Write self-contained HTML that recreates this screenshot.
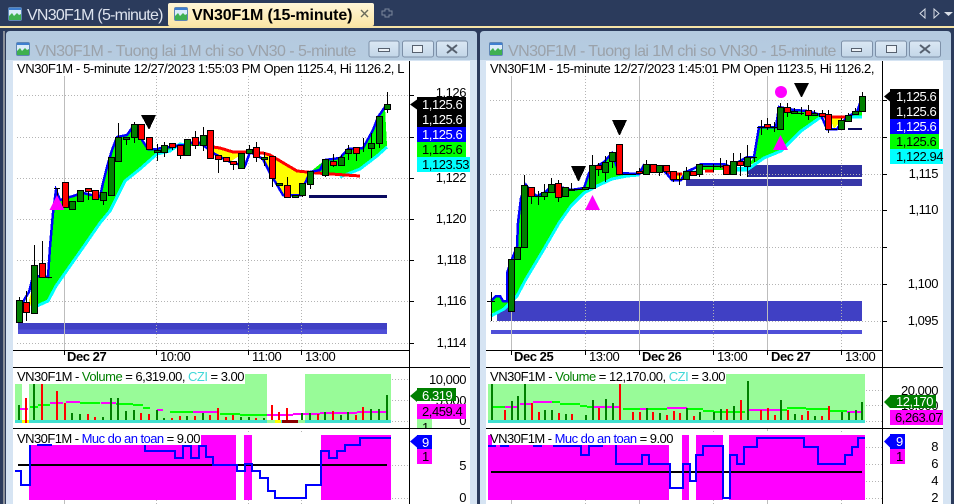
<!DOCTYPE html>
<html><head><meta charset="utf-8"><style>
html,body{margin:0;padding:0;background:#2b3b5c;width:954px;height:504px;overflow:hidden}
svg{display:block}
text{font-family:"Liberation Sans",Arial,sans-serif;font-size:13px;letter-spacing:-.45px;fill:#000}
.c{shape-rendering:crispEdges}
.g{stroke:#b4b4b4;stroke-width:1;stroke-dasharray:1 2;fill:none}
.s{stroke:#bdbdbd;stroke-width:1;fill:none}
.k{stroke:#000;stroke-width:1;fill:none}
.cg{fill:#008000;stroke:#000;stroke-width:1}
.cr{fill:#f00;stroke:#000;stroke-width:1}
.line{fill:none;stroke-linejoin:miter}
.b{font-weight:bold}
.w{fill:#fff}
</style></head><body>
<svg width="954" height="504" viewBox="0 0 954 504" xmlns="http://www.w3.org/2000/svg">
<defs>
<symbol id="ic" viewBox="0 0 14 14"><rect x=".5" y=".5" width="13" height="13" rx="1.500" fill="#dcecfa" stroke="#5f86b5"/><rect x="1" y="1" width="12" height="2" fill="#3f7fd0"/><path d="M1 13V9l3-3 2 3 3-3 2 2 2-1v6z" fill="#3fb050"/></symbol>
<linearGradient id="tab" x1="0" y1="0" x2="0" y2="1"><stop offset="0" stop-color="#fff6d8"/><stop offset="1" stop-color="#fbe6a6"/></linearGradient>
<linearGradient id="win" x1="0" y1="0" x2="0" y2="1"><stop offset="0" stop-color="#b4cadf"/><stop offset="1" stop-color="#d6e4f3"/></linearGradient>
<linearGradient id="btn" x1="0" y1="0" x2="0" y2="1"><stop offset="0" stop-color="#dbe8f4"/><stop offset="1" stop-color="#c3d6e8"/></linearGradient>
</defs>

<!-- top bar -->
<rect width="954" height="504" fill="#2b3b5c"/>
<rect y="26" width="954" height="2" fill="#f7e4a6"/>
<rect x="3" y="31" width="2" height="473" fill="#8a8f98"/>
<rect x="168" y="3" width="206" height="23" rx="2" fill="url(#tab)"/>
<use href="#ic" x="8" y="7" width="14" height="14"/>
<text x="27" y="20" style="font-size:16px;fill:#dde3ee" textLength="136">VN30F1M (5-minute)</text>
<use href="#ic" x="174" y="7" width="14" height="14"/>
<text x="192" y="20" class="b" style="font-size:16px" textLength="160">VN30F1M (15-minute)</text>
<path d="M361 10l7 7M368 10l-7 7" stroke="#6b6b5a" stroke-width="1.400" fill="none"/>
<path d="M385 9h4v2h3v4h-3v2h-4v-2h-3v-4h3z" fill="none" stroke="#7b879c"/>
<path d="M925 9v9l-5-4.500z" fill="none" stroke="#d8dde6"/>
<path d="M934 9v9l5-4.500z" fill="none" stroke="#d8dde6"/>
<path d="M944 12h9l-4.500 4z" fill="#d8dde6"/>

<!-- windows -->
<path d="M6 504V35q0-4 4-4h463q4 0 4 4V504z" fill="url(#win)"/>
<path d="M480 504V35q0-4 4-4h463q4 0 4 4V504z" fill="url(#win)"/>
<rect x="6" y="60" width="471" height="444" fill="#d6e4f3"/>
<rect x="480" y="60" width="471" height="444" fill="#d6e4f3"/>
<use href="#ic" x="16" y="42" width="14" height="14"/>
<use href="#ic" x="489" y="42" width="14" height="14"/>
<text x="35" y="56" style="font-size:16px;fill:#9ba2aa" textLength="321">VN30F1M - Tuong lai 1M chi so VN30 - 5-minute</text>
<text x="508" y="56" style="font-size:16px;fill:#9ba2aa" textLength="328">VN30F1M - Tuong lai 1M chi so VN30 - 15-minute</text>
<g fill="url(#btn)" stroke="#7d90a8">
<rect x="369" y="41" width="30" height="16" rx="2"/><rect x="402.500" y="41" width="31" height="16" rx="2"/><rect x="436.500" y="41" width="31" height="16" rx="2"/>
<rect x="841.500" y="41" width="31" height="16" rx="2"/><rect x="875.500" y="41" width="31" height="16" rx="2"/><rect x="909.500" y="41" width="31" height="16" rx="2"/>
</g>
<g fill="#eef3f8" stroke="#56606e">
<rect x="378.500" y="48.500" width="11" height="3"/><rect x="851.500" y="48.500" width="10" height="3"/>
<rect x="412.500" y="45.500" width="10" height="7"/><rect x="886.500" y="45.500" width="10" height="7"/>
</g>
<path d="M447 45l10 8M457 45l-10 8M920 45l10 8M930 45l-10 8" stroke="#56606e" stroke-width="2" fill="none"/>

<!-- chart backgrounds -->
<rect x="13" y="61" width="457" height="443" fill="#fff"/>
<rect x="486" y="61" width="457" height="443" fill="#fff"/>

<!-- LEFT CHART -->
<g class="c">
<rect x="18" y="323" width="369" height="6.500" fill="#4040c4"/>
<rect x="18" y="329.500" width="369" height="4.500" fill="#4f4fd8"/>
<path class="g" d="M17 95.500H409M17 137.500H409M17 178.500H409M17 219.500H409M17 260.500H409M17 301.500H409M17 343.500H409"/>
<path class="s" d="M64.500 76V350M64.500 428V431M64.500 500V504"/>
<path class="g" d="M156.500 76V350M248.500 76V350M301.500 76V350M156.500 428V504M248.500 428V434M301.500 428V434M248.500 500V504M301.500 500V504"/>
<path d="M37 305L37 277H48L50 247L53 213L56 190L60 200L83 193L100 197L103 183L107 167L112 150L117 137L127 135L132 128L137 126L142 140L148 149L157 149L165 147L172 147L180 145L188 145L193 142L200 143L207 148L203 146L190 146L180 143L170 150L157 153L140 168L125 180L120 190L110 210L100 222L82 248L63 275L56 285L48 300z" fill="#0f0"/>
<path d="M29 300l4-15 2 20-4 2z" fill="#ff0"/>
<path d="M213 148L220 148L233 152L245 152L230 162L213 154z" fill="#ff0"/>
<path d="M263 153L270 155L297 171L310 172L300 195L283 195L270 173z" fill="#ff0"/>
<path d="M310 172L325 160L340 158L348 149L363 148L373 130L378 117L385 107L387 146L377 155L360 168L340 176L317 174z" fill="#0f0"/>
<path class="line" stroke="#0ff" stroke-width="3" d="M37 306L48 301L56 286L63 276L82 249L100 223L110 211L120 191L125 181L140 169L157 154L170 151L180 144L190 146M340 177L360 169L377 156L387 147"/>
<path class="line" stroke="#f00" stroke-width="3" d="M207 147L213 147L220 148L233 152L245 152L263 153L270 155L297 171L317 173L360 176"/>
<path class="line" stroke="#00f" stroke-width="2.500" d="M18 318L24 300L29 292L32 280L37 276L48 277L50 247L53 213L56 190L60 200L83 193L100 197L103 183L107 167L112 150L117 137L127 135L132 128L137 126L142 140L148 149L157 149L165 147L172 147L180 145L188 145L193 142L200 143L207 148L213 153L230 162L245 166L250 152L263 159L270 173L283 195L300 195L310 172L320 170L325 160L340 158L348 149L363 148L373 130L378 117L385 107"/>
<path class="k" d="M19.500 297V322M34.500 245V314M103.500 200V205M118.500 123V137M126.500 139V145M134.500 122V143M157.500 144V161M164.500 142V157M203.500 127V151M249.500 145V149M264.500 152V166M302.500 195V197M310.500 184V189M325.500 175V177M341.500 155V157M348.500 145V160M371.500 133V158M379.500 143V148M387.500 92V113M26.500 291V321M42.500 241V263M88.500 191V200M172.500 147V150M180.500 155V159M195.500 131V149M218.500 159V173M233.500 164V170M256.500 142V162M272.500 178V187M287.500 177V185M333.500 154V167M356.500 153V161M363.500 138V152M54 188.500H60M57.500 188V200M43 277.500H52"/>
<path class="cg" d="M16.500 300.500h6V322.500h-6zM31.500 265.500h6V313.500h-6zM69.500 201.500h6V209.500h-6zM77.500 190.500h6V201.500h-6zM100.500 192.500h6V200.500h-6zM108.500 157.500h6V195.500h-6zM115.500 137.500h6V161.500h-6zM123.500 137.500h6V139.500h-6zM131.500 124.500h6V137.500h-6zM154.500 150.500h6V152.500h-6zM161.500 145.500h6V152.500h-6zM184.500 139.500h6V155.500h-6zM200.500 135.500h6V145.500h-6zM238.500 153.500h6V168.500h-6zM246.500 149.500h6V153.500h-6zM261.500 157.500h6V159.500h-6zM276.500 183.500h6V185.500h-6zM292.500 195.500h6V197.500h-6zM299.500 183.500h6V195.500h-6zM307.500 171.500h6V184.500h-6zM322.500 159.500h6V175.500h-6zM338.500 157.500h6V165.500h-6zM345.500 149.500h6V153.500h-6zM368.500 143.500h6V148.500h-6zM376.500 116.500h6V143.500h-6zM384.500 104.500h6V109.500h-6z"/>
<path class="cr" d="M23.500 302.500h6V312.500h-6zM39.500 263.500h6V277.500h-6zM62.500 182.500h6V207.500h-6zM85.500 188.500h6V191.500h-6zM92.500 190.500h6V199.500h-6zM138.500 124.500h6V139.500h-6zM146.500 137.500h6V149.500h-6zM169.500 143.500h6V147.500h-6zM177.500 145.500h6V155.500h-6zM192.500 137.500h6V145.500h-6zM207.500 130.500h6V158.500h-6zM215.500 155.500h6V159.500h-6zM223.500 157.500h6V161.500h-6zM230.500 161.500h6V164.500h-6zM253.500 147.500h6V157.500h-6zM269.500 156.500h6V178.500h-6zM284.500 185.500h6V197.500h-6zM330.500 161.500h6V165.500h-6zM353.500 147.500h6V153.500h-6z"/>
<rect x="309" y="195" width="78" height="3" fill="#0a0a60"/>
<path d="M57 195L64.500 210H49.500z" fill="#f0f"/>
<path d="M141 115H156L149.500 129H148.500z" fill="#000"/>
</g>

<!-- left chart axis & borders -->
<g class="c">
<path class="k" d="M409.500 61V504M13 350.500H409M13 367.500H470M13 428.500H470M64.500 350V355M156.500 350V355M248.500 350V355M301.500 350V355M409 95.500H414M409 137.500H414M409 178.500H414M409 219.500H414M409 260.500H414M409 301.500H414M409 343.500H414"/>
</g>
<text x="17" y="73" textLength="387">VN30F1M - 5-minute 12/27/2023 1:55:03 PM Open 1125.4, Hi 1126.2, L</text>
<g text-anchor="end">
<text x="466" y="97">1,126</text><text x="466" y="182">1,122</text><text x="466" y="223">1,120</text><text x="466" y="264">1,118</text><text x="466" y="305">1,116</text><text x="466" y="347">1,114</text>
</g>
<path d="M417 97h49v30h-49zM410 104.500l7-5v10z" fill="#000"/>
<rect x="417" y="127" width="49" height="15" fill="#00f"/>
<rect x="417" y="142" width="49" height="15" fill="#0f0"/>
<rect x="417" y="157" width="53" height="15" fill="#0ff"/>
<text x="422" y="109" class="w">1,125.6</text><text x="422" y="124" class="w">1,125.6</text><text x="422" y="139" class="w">1,125.6</text><text x="422" y="154">1,125.6</text><text x="422" y="169">1,123.53</text>
<text x="67" y="361" class="b">Dec 27</text><text x="160" y="361">10:00</text><text x="252" y="361">11:00</text><text x="305" y="361">13:00</text>

<!-- left volume -->
<g class="c">
<rect x="15" y="384" width="7" height="39" fill="#98fb98"/>
<rect x="29" y="384" width="238" height="39" fill="#98fb98"/>
<rect x="245" y="374" width="22" height="10" fill="#98fb98"/>
<rect x="305" y="374" width="86" height="49" fill="#98fb98"/>
<rect x="15" y="420" width="376" height="3" fill="#40e0d0"/>
<rect x="22" y="420" width="7" height="3" fill="#ff0"/><rect x="275" y="420" width="6" height="3" fill="#ff0"/><rect x="282" y="420" width="16" height="3" fill="#8b0000"/><rect x="298" y="420" width="7" height="3" fill="#98fb98"/><rect x="267" y="420" width="8" height="3" fill="#98fb98"/>
<path class="g" d="M392 379.500H409M392 400.500H409M392 421.500H409"/>
<path stroke="#0f0" stroke-width="2" fill="none" d="M30 407H38M38 405H50M80 403H100M116 404H133M133 405H143M143 408H150M170 412H193M220 414H240M240 415H267"/>
<path stroke="#f0f" stroke-width="2" fill="none" d="M20 409H28M50 403H63M66 402H80M101 403H116M157 410H163M193 412H217M267 415H293M293 414H320M320 413H357M357 412H387"/>
<path stroke="#008000" stroke-width="2" fill="none" d="M19 420V405M34 420V384M72 420V413M80 420V414M103 420V417M111 420V398M118 420V398M126 420V411M134 420V410M157 420V410M164 420V418M187 420V416M203 420V413M241 420V417M249 420V417M264 420V418M302 420V413M310 420V413M325 420V412M341 420V415M348 420V412M371 420V409M379 420V409M387 420V395"/>
<path stroke="#f00" stroke-width="2" fill="none" d="M26 423V398M42 420V384M57 420V391M65 420V403M88 420V414M95 420V417M141 420V413M149 420V414M172 420V418M180 420V416M195 420V416M210 420V415M218 420V408M226 420V417M233 420V415M256 420V418M272 420V405M279 420V412M287 420V408M318 420V414M333 420V411M356 420V415M363 420V407"/>
</g>
<rect x="13" y="368" width="232" height="16" fill="#fff"/>
<text x="17" y="381" textLength="227">VN30F1M - <tspan fill="#008000">Volume</tspan> = 6,319.00, <tspan fill="#40d8d8">CZI</tspan> = 3.00</text>
<text x="466" y="384" text-anchor="end">10,000</text><text x="466" y="405" text-anchor="end">5,000</text><text x="466" y="425" text-anchor="end">0</text>
<path d="M417 388h39v13h-39zM410 396l7-6v12z" fill="#008000"/>
<text x="422" y="400" class="w">6,319</text>
<rect x="417" y="404" width="49" height="15" fill="#f0f"/><text x="422" y="416">2,459.4</text>
<rect x="417" y="419" width="15" height="9" fill="#98fb98"/><text x="422" y="432">1</text>
<rect x="417" y="429" width="15" height="6" fill="#fff"/>

<!-- left muc do -->
<g class="c">
<rect x="29" y="435" width="207" height="65" fill="#f0f"/>
<rect x="244" y="435" width="8" height="65" fill="#f0f"/>
<rect x="321" y="435" width="70" height="65" fill="#f0f"/>
<path class="g" d="M392 465.500H409M392 498.500H409"/>
<rect x="18" y="464" width="369" height="2" fill="#000"/>
<path class="line" stroke="#00f" stroke-width="2" d="M15 471H21V485H30V443H145V451H175V458H183V446H191V458H199V446H206V457H213V465H237V471H245V464H252V471H260V478H268V491H275V498H306V485H321V451H329V458H337V451H345V445H360V438H391"/>
<path class="k" d="M13 428.500H470"/>
</g>
<rect x="13" y="429" width="188" height="16" fill="#fff"/>
<path class="c" d="M37 445H52" stroke="#00f" stroke-width="2"/>
<text x="17" y="443" textLength="183">VN30F1M - <tspan fill="#00f">Muc do an toan</tspan> = 9.00</text>
<text x="466" y="470" text-anchor="end">5</text><text x="466" y="502" text-anchor="end">0</text>
<path d="M417 435h15v14h-15zM410 441.500l7-6v12z" fill="#00f"/><text x="422" y="447" class="w">9</text>
<rect x="417" y="449" width="15" height="15" fill="#f0f"/><text x="422" y="461">1</text>

<!-- RIGHT CHART -->
<g class="c">
<rect x="497" y="301" width="365" height="20" fill="#4040c4"/>
<rect x="491" y="330" width="371" height="4" fill="#4f4fd8"/>
<rect x="747" y="165" width="115" height="12" fill="#3030a0"/>
<rect x="686" y="179" width="176" height="7" fill="#3838a8"/>
<path class="g" d="M490 100.500H882M490 137.500H882M490 174.500H882M490 210.500H882M490 247.500H882M490 284.500H882M490 321.500H882"/>
<path class="s" d="M511.500 76V350M639.500 76V350M767.500 76V350M511.500 428V431M639.500 428V431M767.500 428V431M511.500 500V504M639.500 500V504M767.500 500V504"/>
<path class="g" d="M585.500 76V350M713.500 76V350M841.500 76V350M585.500 428V434M713.500 428V434M841.500 428V434M585.500 500V504M713.500 500V504M841.500 500V504"/>
<path d="M491 301L496 296L500 296L503 301L507 301L507 273L512 259L517 247L518 223L521 198L526 185L531 192L537 196L544 193L551 187L564 188L571 190L584 188L589 173L596 167L604 162L612 153L619 173L639 174L627 175L612 178L597 185L584 192L571 205L559 222L544 248L526 278L517 295L504 308L491 314z" fill="#0f0"/>
<path d="M644 165L661 167L661 171L644 172z" fill="#0ff"/>
<path d="M701 165L724 165L724 170L701 170z" fill="#0f0"/>
<path d="M725 167h22v4h-22z" fill="#0ff"/>
<path d="M686 172h12v3h-12z" fill="#0ff"/>
<path d="M676 173L683 173L680 179L677 179z" fill="#ff0"/>
<path d="M747 167L754 157L759 127L776 127L779 107L794 110L807 111L821 115L801 130L781 150L764 157z" fill="#0f0"/>
<path d="M830 118L843 118L834 129z" fill="#ff0"/>
<path d="M842 118L847 117L857 112L862 97V117H842z" fill="#0f0"/>
<path class="line" stroke="#0ff" stroke-width="3" d="M491 316L504 309L517 296L526 279L544 249L559 223L571 206L584 193L597 186L612 179L627 176L639 175M662 171H670M684 172H698M725 170H747L764 158L781 151L801 131L821 117M834 117H862"/>
<path class="line" stroke="#f00" stroke-width="3" d="M640 170H662L672 174H682M705 171H714M722 167H730M824 117H847"/>
<path class="line" stroke="#00f" stroke-width="2.500" d="M491 301L496 296L500 296L503 301L507 301L507 273L512 259L517 247L518 223L521 198L526 185L531 192L537 196L544 193L551 187L564 188L571 190L584 188L589 173L596 167L604 162L612 153L619 173L639 174L644 165L661 167L672 180L681 180L686 172L697 167L701 164L724 164L730 167L747 157L754 157L759 127L776 127L779 107L794 110L807 111L821 115L827 129L837 129L847 117L857 112L862 97"/>
<path class="k" d="M491.500 292V321M487 301.500H495M524.500 175V185M531.500 196V204M538.500 191V205M533 196.500H542M544.500 184V200M551.500 178V184M558.500 180V202M571.500 183V189M575 189.500H582M592.500 155V165M598.500 163V176M605.500 156V182M612.500 161V168M623 174.500H636M639.500 168V174M646.500 160V164M659.500 172V176M666.500 171V174M673.500 179V182M679.500 173V185M676 179.500H683M686.500 167V171M699.500 174V177M703 166.500H710M713.500 164V172M710 166.500H717M720.500 158V168M717 166.500H724M726.500 160V165M733.500 153V161M740.500 153V176M747.500 145V177M751 157.500H757M754.500 157V162M757 127.500H764M761.500 120V135M767.500 118V130M771 127.500H777M774.500 122V132M780.500 103V107M787.500 103V117M794.500 108V111M798 113.500H804M801.500 107V115M808.500 105V120M814.500 110V113M822.500 110V113M828.500 110V133M831 129.500H837M841.500 118V120M848.500 113V115M855.500 108V111M862.500 92V96"/>
<path class="cg" d="M508.500 259.500h6V311.500h-6zM514.500 247.500h6V259.500h-6zM521.500 185.500h6V247.500h-6zM541.500 192.500h6V196.500h-6zM548.500 184.500h6V192.500h-6zM562.500 187.500h6V196.500h-6zM582.500 187.500h6V189.500h-6zM589.500 165.500h6V188.500h-6zM602.500 162.500h6V172.500h-6zM609.500 152.500h6V161.500h-6zM643.500 164.500h6V174.500h-6zM656.500 165.500h6V172.500h-6zM683.500 171.500h6V179.500h-6zM696.500 164.500h6V174.500h-6zM730.500 161.500h6V174.500h-6zM744.500 157.500h6V166.500h-6zM777.500 107.500h6V129.500h-6zM791.500 111.500h6V113.500h-6zM811.500 113.500h6V115.500h-6zM838.500 120.500h6V129.500h-6zM845.500 115.500h6V121.500h-6zM852.500 111.500h6V114.500h-6zM859.500 96.500h6V111.500h-6z"/>
<path class="cr" d="M528.500 187.500h6V196.500h-6zM555.500 183.500h6V197.500h-6zM568.500 189.500h6V190.500h-6zM595.500 165.500h6V169.500h-6zM616.500 144.500h6V174.500h-6zM636.500 171.500h6V173.500h-6zM650.500 164.500h6V172.500h-6zM663.500 165.500h6V171.500h-6zM670.500 171.500h6V179.500h-6zM690.500 171.500h6V175.500h-6zM723.500 165.500h6V174.500h-6zM737.500 161.500h6V165.500h-6zM764.500 124.500h6V127.500h-6zM784.500 107.500h6V112.500h-6zM805.500 110.500h6V115.500h-6zM819.500 113.500h6V116.500h-6zM825.500 114.500h6V129.500h-6z"/>
<rect x="848" y="128" width="14" height="2" fill="#0a0a60"/>
<path d="M592.500 195L600 210H585z" fill="#f0f"/>
<path d="M780.500 135L788 150H773z" fill="#f0f"/>
<path d="M571 166H586L579 181H578z" fill="#000"/>
<path d="M612 120H627L620 135H619z" fill="#000"/>
<path d="M794 83H809L802 97H801z" fill="#000"/>
</g>
<circle cx="781" cy="92" r="6" fill="#f0f"/>

<!-- right axis -->
<g class="c">
<path class="k" d="M882.500 61V504M486 350.500H882M486 367.500H943M486 428.500H943M511.500 350V355M585.500 350V355M639.500 350V355M713.500 350V355M767.500 350V355M841.500 350V355M882 100.500H887M882 137.500H887M882 174.500H887M882 210.500H887M882 247.500H887M882 284.500H887M882 321.500H887"/>
</g>
<text x="490" y="73" textLength="384">VN30F1M - 15-minute 12/27/2023 1:45:01 PM Open 1123.5, Hi 1126.2,</text>
<g text-anchor="end">
<text x="938" y="178">1,115</text><text x="938" y="214">1,110</text><text x="938" y="288">1,100</text><text x="938" y="325">1,095</text>
</g>
<path d="M890 89h49v30h-49zM884 96.500l6-5v10z" fill="#000"/>
<rect x="890" y="119" width="49" height="15" fill="#00f"/>
<rect x="890" y="134" width="49" height="15" fill="#0f0"/>
<rect x="890" y="149" width="53" height="15" fill="#0ff"/>
<text x="896" y="101" class="w">1,125.6</text><text x="896" y="116" class="w">1,125.6</text><text x="896" y="131" class="w">1,125.6</text><text x="896" y="146">1,125.6</text><text x="896" y="161">1,122.94</text>
<text x="514" y="361" class="b">Dec 25</text><text x="589" y="361">13:00</text><text x="642" y="361" class="b">Dec 26</text><text x="717" y="361">13:00</text><text x="771" y="361" class="b">Dec 27</text><text x="845" y="361">13:00</text>

<!-- right volume -->
<g class="c">
<rect x="488" y="374" width="377" height="49" fill="#98fb98"/>
<rect x="488" y="420" width="377" height="3" fill="#40e0d0"/>
<path class="g" d="M866 390.500H882M866 405.500H882M866 421.500H882"/>
<path stroke="#0f0" stroke-width="2" fill="none" d="M492 407H505M552 402H560M560 404H580M580 406H587M587 407H593M623 409H640M647 409H667M687 409H703M703 411H714M714 412H745M780 410H787M787 408H806M806 409H830M830 411H847"/>
<path stroke="#f0f" stroke-width="2" fill="none" d="M505 407H518M520 404H532M533 402H552M593 407H620M640 409H647M667 408H687M747 410H780M847 412H862"/>
<path stroke="#008000" stroke-width="2" fill="none" d="M492 420V384M512 420V401M518 420V396M525 420V384M545 420V410M552 420V410M566 420V414M586 420V415M593 420V400M606 420V399M613 420V403M647 420V408M660 420V413M687 420V408M700 420V412M714 420V412M721 420V409M734 420V406M748 420V381M781 420V400M795 420V414M815 420V416M842 420V412M849 420V412M856 420V410M862 420V402"/>
<path stroke="#f00" stroke-width="2" fill="none" d="M505 420V410M532 420V403M539 420V412M559 420V413M572 420V414M599 420V408M620 420V384M633 420V412M640 420V412M653 420V412M667 420V415M674 420V411M680 420V413M694 420V416M727 420V409M741 420V400M761 420V410M768 420V408M775 420V415M788 420V410M802 420V415M808 420V411M822 420V416M829 420V406"/>
</g>
<rect x="486" y="368" width="240" height="16" fill="#fff"/>
<text x="490" y="381" textLength="235">VN30F1M - <tspan fill="#008000">Volume</tspan> = 12,170.00, <tspan fill="#40d8d8">CZI</tspan> = 3.00</text>
<text x="938" y="395" text-anchor="end">20,000</text><text x="938" y="410" text-anchor="end">10,000</text>
<path d="M890 395h46v13h-46zM884 402l6-6v12z" fill="#008000"/>
<text x="896" y="406" class="w">12,170</text>
<rect x="890" y="410" width="53" height="15" fill="#f0f"/><text x="895" y="422">6,263.07</text>

<!-- right muc do -->
<g class="c">
<rect x="488" y="435" width="181" height="65" fill="#f0f"/>
<rect x="682" y="435" width="7" height="65" fill="#f0f"/>
<rect x="696" y="435" width="27" height="65" fill="#f0f"/>
<rect x="729" y="435" width="136" height="65" fill="#f0f"/>
<path class="g" d="M866 447.500H882M866 464.500H882M866 481.500H882M866 498.500H882"/>
<rect x="491" y="471" width="371" height="2" fill="#000"/>
<path class="line" stroke="#00f" stroke-width="2" d="M488 446H495V437H501V446H508V437H534V446H541V437H554V446H581V455H589V446H595V446H602V437H616V464H642V455H649V464H670V488H683V464H690V481H696V455H703V446H723V498H730V455H737V464H744V447H757V438H804V447H818V464H845V455H852V447H858V438H865"/>
</g>
<rect x="492" y="429" width="181" height="16" fill="#fff"/>
<rect x="486" y="429" width="2" height="16" fill="#fff"/>
<path class="line c" stroke="#00f" stroke-width="2" d="M488 446H495M501 446H508M534 446H541M554 446H581M595 446H602"/>
<text x="490" y="443" textLength="183">VN30F1M - <tspan fill="#00f">Muc do an toan</tspan> = 9.00</text>
<text x="938" y="451" text-anchor="end">8</text><text x="938" y="468" text-anchor="end">6</text><text x="938" y="485" text-anchor="end">4</text><text x="938" y="502" text-anchor="end">2</text>
<path d="M890 434h15v15h-15zM884 441.500l6-6v12z" fill="#00f"/><text x="896" y="446" class="w">9</text>
<rect x="890" y="449" width="15" height="15" fill="#f0f"/><text x="896" y="461">1</text>
</svg>
</body></html>
